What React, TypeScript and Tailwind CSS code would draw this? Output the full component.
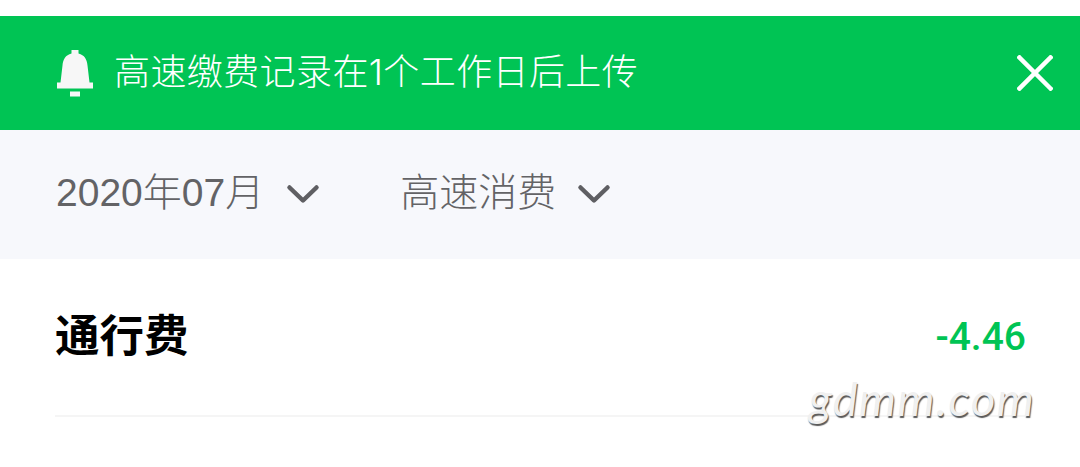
const sans = "font-['Liberation_Sans','Noto_Sans_CJK_SC',sans-serif]";

function Bell() {
  return (
    <svg width="38" height="48" viewBox="0 0 38 48" className="shrink-0">
      <path
        d="M15.500 1h7v3.500c6 1.500 8.500 6 9 12l2 17h3.500v6h-36v-6h3.500l2-17c0.500-6 3-10.500 9-12z"
        fill="#f7f7f7"
      />
      <rect x="14" y="42.500" width="10" height="5" fill="#f7f7f7" />
    </svg>
  );
}

function Chevron() {
  return (
    <svg width="34" height="22" viewBox="0 0 34 22" className="shrink-0">
      <path
        d="M3.500 3.500L17 16.500L30.500 3.500"
        fill="none"
        stroke="#5f5f63"
        strokeWidth="4.500"
        strokeLinecap="round"
        strokeLinejoin="round"
      />
    </svg>
  );
}

export default function App() {
  return (
    <div className={`relative h-[467px] w-[1080px] overflow-hidden bg-white ${sans}`}>
      <div className="h-4" />
      <div className="flex h-[114px] items-center bg-[#00c454] pl-[56px] pr-[26px]">
        <Bell />
        <span className="mb-[2px] ml-[20px] font-['Inter','Noto_Sans_CJK_SC',sans-serif] text-[36px] leading-none font-light tracking-[0.4px] text-white">
          高速缴费记录在1个工作日后上传
        </span>
        <svg width="36" height="36" viewBox="0 0 36 36" className="mr-px ml-auto shrink-0">
          <path d="M2.500 2.500L33.500 33.500M33.500 2.500L2.500 33.500" stroke="#fff" strokeWidth="4.500" strokeLinecap="square" />
        </svg>
      </div>
      <div className="flex h-[129px] items-center bg-[#f7f8fc] pl-[56px] text-[#636366]">
        <span className="mb-[5px] text-[39px] leading-none font-light">2020年07月</span>
        <span className="ml-[22px]"><Chevron /></span>
        <span className="mb-[5px] ml-[80px] text-[39px] leading-none font-light">高速消费</span>
        <span className="ml-[21px]"><Chevron /></span>
      </div>
      <div className="mx-[55px] flex h-[158px] items-center justify-between border-b-2 border-[#f5f5f5]">
        <span className="text-[44.5px] leading-none font-bold text-black">通行费</span>
        <span className="-mr-px font-['Roboto',sans-serif] text-[39px] leading-none font-medium text-[#00c454]">-4.46</span>
      </div>
      <span
        className="absolute top-[375px] left-[809px] font-['Lato','Open_Sans',sans-serif] text-[47px] leading-none tracking-[1.500px] text-[#f0f0f0] italic [text-shadow:1px_1.500px_1px_#5a5a5a]"
      >
        gdmm.com
      </span>
    </div>
  );
}
